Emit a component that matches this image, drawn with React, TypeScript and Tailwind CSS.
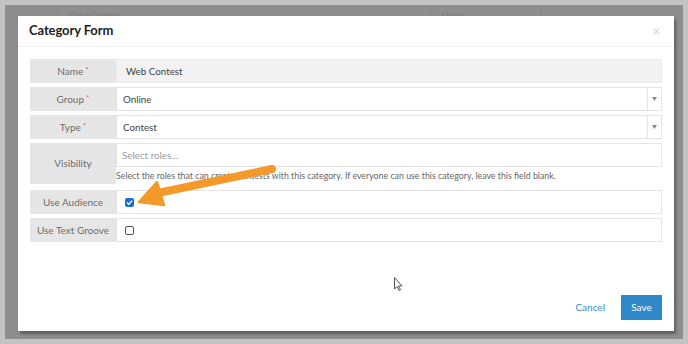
import React from "react";

const Row = ({ label, req, children, readOnly }: { label: string; req?: boolean; children?: React.ReactNode; readOnly?: boolean }) => (
  <div className="flex h-[24px]">
    <div className="w-[86px] shrink-0 bg-[#e6e6e6] flex items-center justify-center text-[10px] text-[#6d6d6d]">
      {label}
      {req && <span className="text-[#d46a6a] text-[8px] ml-[2px] -mt-[3px]">*</span>}
    </div>
    <div className={`flex-1 flex items-center border ${readOnly ? "bg-[#f2f2f2] border-[#ececec]" : "bg-white border-[#e4e4e4]"}`}>
      {children}
    </div>
  </div>
);

const Caret = () => (
  <div className="ml-auto h-full w-[14px] border-l border-[#e4e4e4] flex items-center justify-center">
    <svg width="5" height="4" viewBox="0 0 5 4"><path d="M0 0 L5 0 L2.5 4 Z" fill="#888" /></svg>
  </div>
);

export default function App() {
  return (
    <div className="w-[688px] h-[344px] bg-[#c3c3c3] p-[5px]" style={{ fontFamily: "Lato, 'Noto Sans', sans-serif" }}>
      <div className="relative h-full bg-[#8e8e8e] pl-[13px] pt-[11px]">
        {/* faint background table */}
        <div className="absolute left-[52px] top-0 h-[11px] w-px bg-[#848484]" />
        <div className="absolute left-[425px] top-0 h-[11px] w-px bg-[#848484]" />
        <div className="absolute left-[536px] top-0 h-[11px] w-px bg-[#848484]" />
        <div className="absolute left-[64px] top-[6px] text-[8px] leading-none text-[#7a7a7a]">Quick Contest</div>
        <div className="absolute left-[437px] top-[6px] text-[8px] leading-none text-[#7a7a7a]">Online</div>

        <div className="relative w-[656px] h-[315px] bg-white flex flex-col shadow-[2px_3px_3px_rgba(0,0,0,0.35)]">
          <div className="h-[31px] px-[11px] flex items-center justify-between border-b border-[#f0f0f0]">
            <span className="text-[13px] font-bold text-[#1e1e1e] tracking-[-0.1px]">Category Form</span>
            <span className="text-[13px] text-[#cfcfcf] leading-none mr-[3px]">×</span>
          </div>
          <div className="px-[12px] pt-[12px] flex flex-col gap-[4px]">
            <Row label="Name" req readOnly>
              <span className="pl-[9px] text-[9.8px] text-[#444]">Web Contest</span>
            </Row>
            <Row label="Group" req>
              <span className="pl-[6px] text-[9.8px] text-[#444]">Online</span>
              <Caret />
            </Row>
            <Row label="Type" req>
              <span className="pl-[6px] text-[9.8px] text-[#444]">Contest</span>
              <Caret />
            </Row>
            <div className="flex h-[41px]">
              <div className="w-[86px] shrink-0 bg-[#e6e6e6] flex items-center justify-center text-[10px] text-[#6d6d6d]">Visibility</div>
              <div className="flex-1 flex flex-col">
                <div className="h-[24px] border border-[#e4e4e4] flex items-center pl-[5px] text-[9.8px] text-[#9a9a9a]">Select roles...</div>
                <div className="pt-[2px] text-[8.8px] text-[#666] whitespace-nowrap">Select the roles that can create contests with this category. If everyone can use this category, leave this field blank.</div>
              </div>
            </div>
            <div className="mt-[2px]">
              <Row label="Use Audience">
                <span className="ml-[8px] w-[9px] h-[9px] rounded-[2px] bg-[#1a6fd6] flex items-center justify-center">
                  <svg width="7" height="7" viewBox="0 0 7 7"><path d="M1 3.6 L2.8 5.3 L6 1.6" stroke="white" strokeWidth="1.4" fill="none" /></svg>
                </span>
              </Row>
            </div>
            <Row label="Use Text Groove">
              <span className="ml-[8px] w-[9px] h-[9px] rounded-[2px] border border-[#555] bg-white" />
            </Row>
          </div>
          <div className="mt-auto flex justify-end items-center gap-[16px] pr-[12px] pb-[11px]">
            <span className="text-[10px] text-[#3d8cc4]">Cancel</span>
            <span className="w-[41px] h-[25px] bg-[#2d89c8] text-white text-[10px] flex items-center justify-center">Save</span>
          </div>
        </div>
      </div>
      {/* orange arrow overlay */}
      <svg className="absolute left-0 top-0" width="688" height="344" viewBox="0 0 688 344">
        <path d="M272 169 L158 193" stroke="#f39a2a" strokeWidth="8" strokeLinecap="round" />
        <path d="M139 202 L157 182 L164 205 Z" fill="#f39a2a" stroke="#f39a2a" strokeWidth="2.5" strokeLinejoin="round" />
        {/* mouse cursor */}
        <path d="M394.5 277.5 L394.5 289 L397 286.5 L399 290.5 L400.5 289.8 L398.6 286 L402 286 Z" fill="white" stroke="#444" strokeWidth="0.9" />
      </svg>
    </div>
  );
}
